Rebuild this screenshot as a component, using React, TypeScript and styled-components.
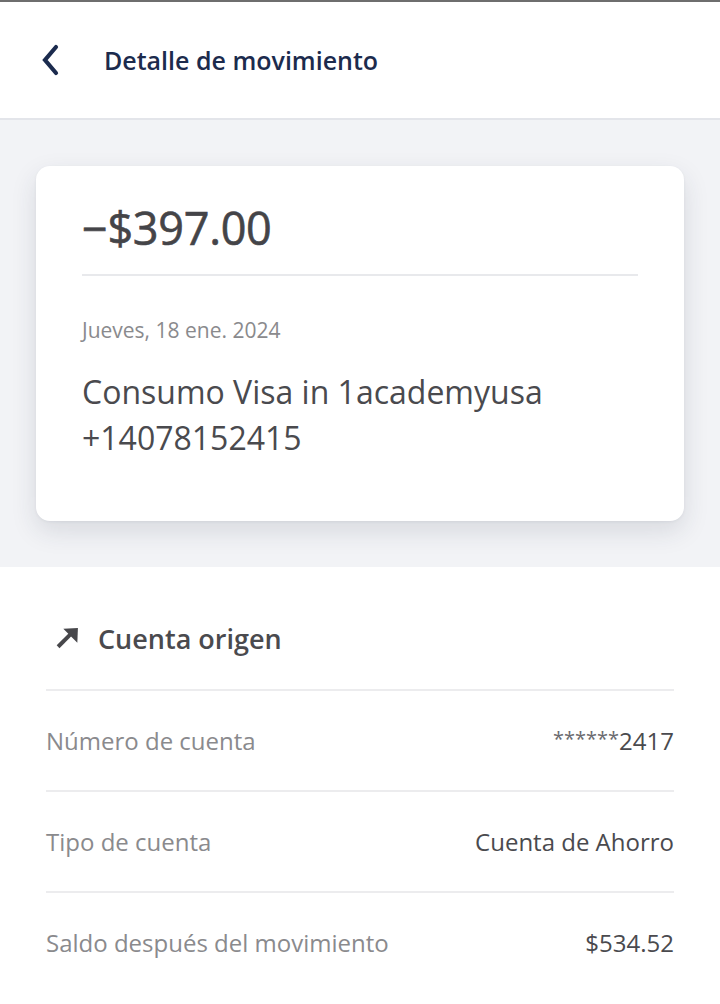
import styled, { createGlobalStyle } from "styled-components"

const GlobalStyle = createGlobalStyle`
  html, body {
    margin: 0;
    padding: 0;
    background: #ffffff;
    font-family: "Open Sans", "Noto Sans", "Liberation Sans", sans-serif;
  }
`

interface Row {
  label: string
  value: string
  masked?: boolean
}

const rows: Row[] = [
  { label: "Número de cuenta", value: "2417", masked: true },
  { label: "Tipo de cuenta", value: "Cuenta de Ahorro" },
  { label: "Saldo después del movimiento", value: "$534.52" },
]

const App = () => {
  return (
    <Page>
      <GlobalStyle />
      <TopLine />
      <Header>
        <BackButton aria-label="Volver">
          <svg width="20" height="32" viewBox="0 0 20 32" fill="none">
            <path d="M16 3 L5 16 L16 29" stroke="#1b2b4e" strokeWidth="4.2" strokeLinecap="round" strokeLinejoin="miter" />
          </svg>
        </BackButton>
        <Title>Detalle de movimiento</Title>
      </Header>

      <Summary>
        <Card>
          <Amount>−$397.00</Amount>
          <Divider />
          <DateText>Jueves, 18 ene. 2024</DateText>
          <Description>
            Consumo Visa in 1academyusa
            <br />
            +14078152415
          </Description>
        </Card>
      </Summary>

      <Details>
        <SectionHead>
          <svg width="28" height="28" viewBox="0 0 24 24">
            <path d="M3.5 19.5 L14.5 8.5" stroke="#47474b" strokeWidth="3.4" strokeLinecap="butt" />
            <polygon points="8,4 20.5,3.5 20,16" fill="#47474b" />
          </svg>
          <SectionTitle>Cuenta origen</SectionTitle>
        </SectionHead>
        {rows.map((r) => (
          <DetailRow key={r.label}>
            <Label>{r.label}</Label>
            <Value>
              {r.masked && <Mask>******</Mask>}
              {r.value}
            </Value>
          </DetailRow>
        ))}
      </Details>
    </Page>
  )
}

const Page = styled.div`
  width: 720px;
  min-height: 1004px;
  background: #ffffff;
  overflow: hidden;
`

const TopLine = styled.div`
  height: 2px;
  background: #6e6e6e;
`

const Header = styled.header`
  display: flex;
  align-items: center;
  padding: 0 0 0 40px;
  border-bottom: 2px solid #e3e5ea;
  background: #ffffff;
  box-sizing: border-box;
  height: 118px;
`

const BackButton = styled.button`
  background: none;
  border: 0;
  padding: 0;
  margin: 0 44px 0 0;
  display: flex;
  align-items: center;
  cursor: pointer;
`

const Title = styled.h1`
  margin: 0;
  font-size: 25px;
  font-weight: 600;
  color: #1c2b4d;
`

const Summary = styled.section`
  background: #f2f3f6;
  padding: 46px 36px;
`

const Card = styled.div`
  background: #ffffff;
  border-radius: 14px;
  padding: 30px 46px 60px;
  box-shadow: 0 10px 26px rgba(40, 50, 70, 0.13), 0 1px 3px rgba(40, 50, 70, 0.06);
`

const Amount = styled.div`
  font-size: 45px;
  line-height: 64px;
  font-weight: 400;
  color: #444448;
  letter-spacing: -0.3px;
  -webkit-text-stroke: 0.6px #444448;
`

const Divider = styled.hr`
  border: 0;
  border-top: 2px solid #e8e9ec;
  margin: 14px 0 0;
`

const DateText = styled.div`
  margin-top: 40px;
  font-size: 21px;
  line-height: 28px;
  color: #8a8a8d;
`

const Description = styled.div`
  margin-top: 25px;
  font-size: 32px;
  line-height: 46px;
  color: #4a4a4e;
`

const Details = styled.section`
  padding: 52px 46px 0;
`

const SectionHead = styled.div`
  display: flex;
  align-items: center;
  gap: 16px;
  padding-left: 8px;
  height: 38px;
  margin-bottom: 32px;
`

const SectionTitle = styled.h2`
  margin: 0;
  font-size: 27px;
  font-weight: 600;
  color: #4a4a4e;
`

const DetailRow = styled.div`
  height: 99px;
  display: flex;
  align-items: center;
  justify-content: space-between;
  border-top: 2px solid #ececee;
`

const Label = styled.span`
  font-size: 24px;
  color: #8a8a8d;
`

const Value = styled.span`
  font-size: 24px;
  color: #4a4a4e;
`

const Mask = styled.span`
  font-size: 20px;
  vertical-align: 4px;
  color: #6a6a6e;
`

export default App
